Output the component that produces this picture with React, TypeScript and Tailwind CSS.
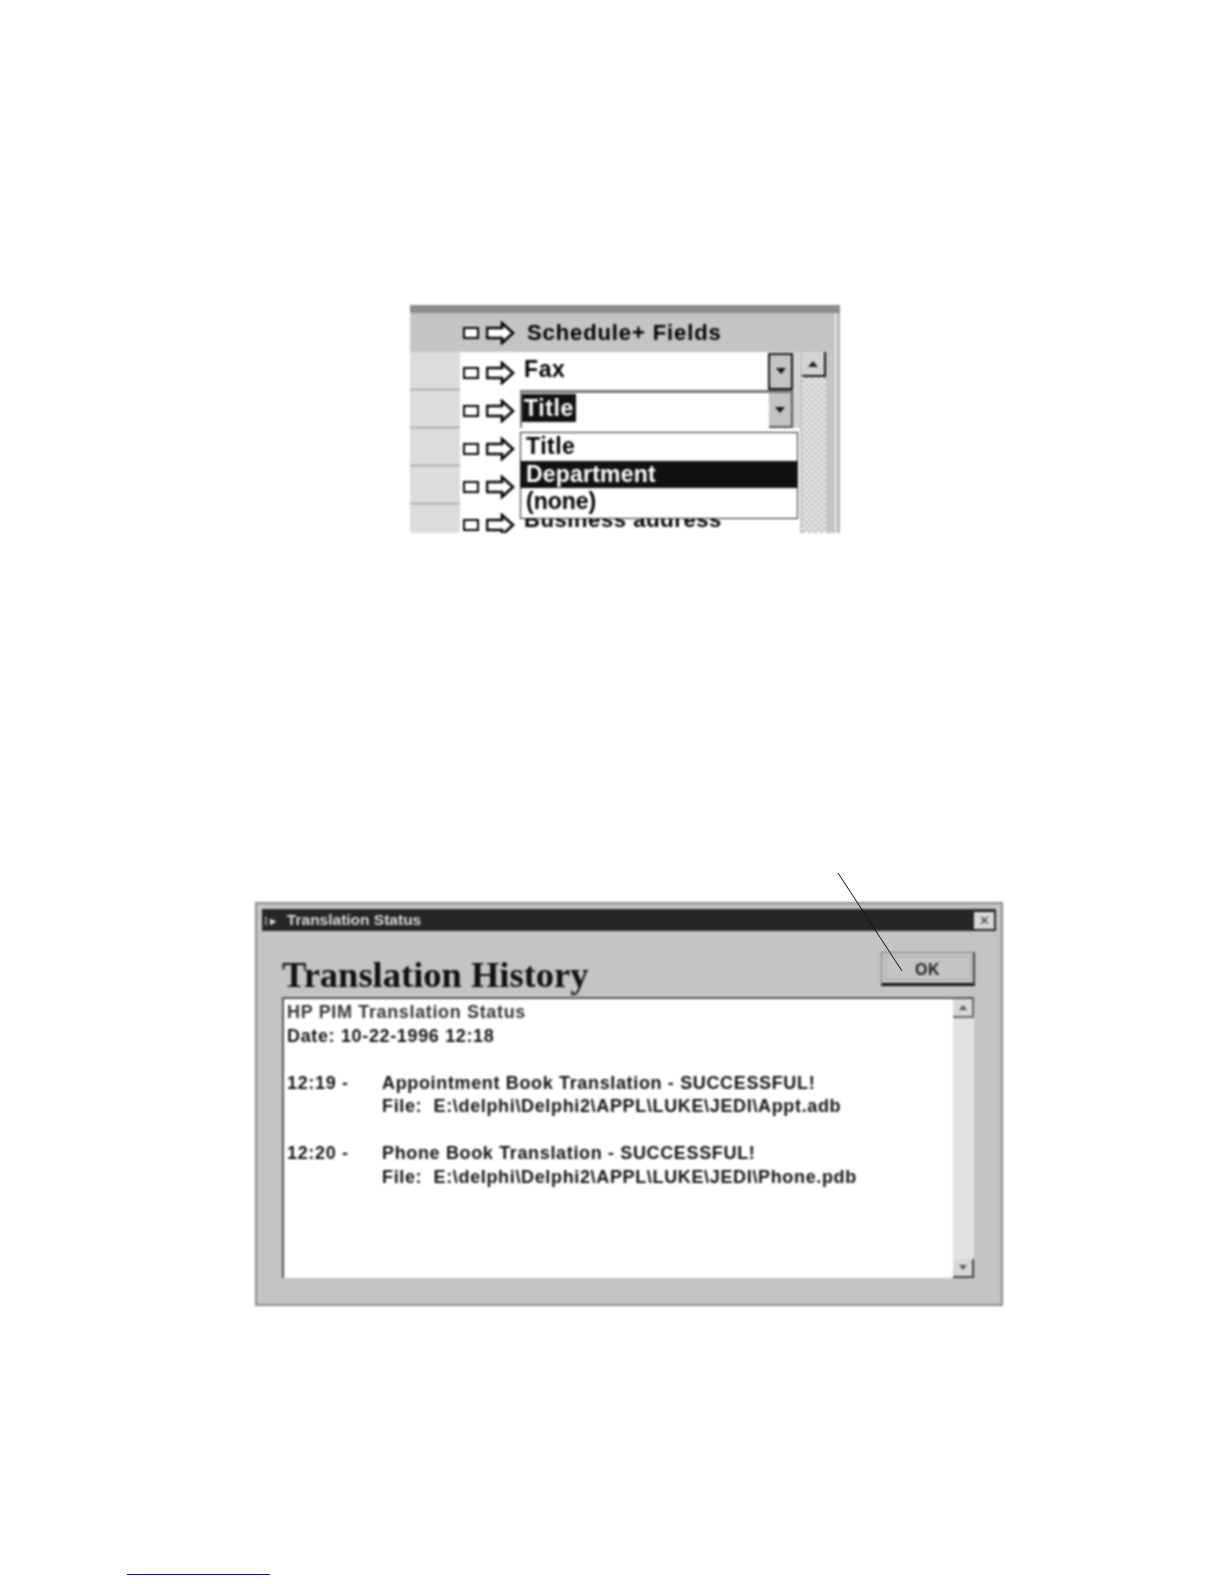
const sans = "font-['Liberation_Sans',Arial,sans-serif]";

function Handle() {
  return (
    <div className="flex items-center gap-[7px] w-[60px] shrink-0 pl-[3px]">
      <div className="w-[16px] h-[12px] border-2 border-black bg-white" />
      <svg width="29" height="24" viewBox="0 0 29 24" fill="#fff" stroke="#000" strokeWidth="2.6">
        <path d="M1 7h15V2l11 10-11 10v-5H1z" />
      </svg>
    </div>
  );
}

function ArrowDown() {
  return <div className="w-0 h-0 border-x-[5px] border-x-transparent border-t-[6px] border-t-[#111]" />;
}

function Row({ children }: { children?: React.ReactNode }) {
  return (
    <div className="flex h-[38px]">
      <div className="w-[50px] shrink-0 bg-[#dcdcdc] border-b border-[#8a8a8a]" />
      <div className="flex flex-1 bg-white items-center">
        <div className="mt-[4px]">
          <Handle />
        </div>
        {children}
      </div>
    </div>
  );
}

function FieldMapper() {
  return (
    <div className={`${sans} relative ml-[410px] w-[430px] h-[228px] overflow-hidden bg-[#b4b4b4] pr-[3px] border-t-[8px] border-t-[#8c8c8c] blur-[0.8px]`}>
      <div className="h-full bg-[#c4c4c4] border-r-2 border-r-[#e8e8e8]">
        <div className="h-[39px] flex items-center pl-[50px]">
          <div className="mt-[1px]">
            <Handle />
          </div>
          <span className="text-[22px] font-bold text-black tracking-[0.9px] ml-[7px]">Schedule+ Fields</span>
        </div>
        <div className="flex">
          <div className="w-[390px] shrink-0">
            <Row>
              <div className="flex flex-1 h-full items-center">
                <div className="flex flex-1 items-center justify-between">
                  <span className="text-[23px] text-black ml-[4px] tracking-[0.6px] font-bold -mt-[4px]">Fax</span>
                  <div className="w-[25px] h-[37px] bg-[#c4c4c4] border-2 border-[#111] flex items-center justify-center">
                    <ArrowDown />
                  </div>
                </div>
                <div className="w-[7px] h-full bg-[#d4d4d4]" />
              </div>
            </Row>
            <Row>
              <div className="flex flex-1 h-full items-center">
                <div className="flex flex-1 h-full items-center justify-between border-t-[3px] border-l-2 border-t-[#777] border-l-[#777]">
                  <span className="bg-[#111] text-white text-[23px] leading-[28px] px-[2px] font-bold tracking-[0.6px] -mt-[5px]">Title</span>
                  <div className="w-[24px] h-full bg-[#c4c4c4] border-b-2 border-b-[#555] border-r-2 border-r-[#555] flex items-center justify-center">
                    <ArrowDown />
                  </div>
                </div>
                <div className="w-[7px] h-full bg-[#d4d4d4]" />
              </div>
            </Row>
            <Row />
            <Row />
            <Row>
              <span className="text-[22px] text-black font-bold ml-[4px] tracking-[0.6px] -mt-[7px]">Business address</span>
            </Row>
          </div>
          <div className="flex flex-col pl-[2px]">
            <div className="w-[24px] h-[25px] bg-[#d4d4d4] border-r-2 border-b-2 border-[#111] flex items-center justify-center">
              <div className="w-0 h-0 border-x-[5px] border-x-transparent border-b-[6px] border-b-[#222]" />
            </div>
            <div className="w-[24px] h-[160px] bg-[repeating-conic-gradient(#c4c4c4_0_25%,#ececec_0_50%)] bg-[length:6px_6px]" />
          </div>
        </div>
      </div>
      {/* open dropdown sits over the rows */}
      <div className="absolute left-[110px] top-[119px] w-[278px] h-[87px] bg-white border border-[#222] flex flex-col text-[23px] leading-[27px] text-black">
        <div className="h-[28px] pl-[5px] font-bold tracking-[0.5px]">Title</div>
        <div className="h-[27px] pl-[5px] bg-[#111] text-white font-bold tracking-[0.2px]">Department</div>
        <div className="h-[28px] pl-[5px] font-bold">(none)</div>
      </div>
    </div>
  );
}

function LogLine({ time, text }: { time?: string; text?: string }) {
  return (
    <div className="flex h-[23.5px] items-center">
      <span className="w-[95px] shrink-0">{time}</span>
      <span className="whitespace-pre">{text}</span>
    </div>
  );
}

function StatusWindow() {
  return (
    <div className={`${sans} relative ml-[255px] w-[748px] h-[404px] bg-[#c4c4c4] border-2 border-[#8a8a8a] p-[5px] flex flex-col blur-[0.8px]`}>
      <div className="h-[22px] bg-[#262626] flex items-center justify-between pl-[2px] pr-[2px]">
        <span className="text-[15.5px] font-bold text-[#ddd]">
          <span className="text-[11px] mr-[4px]">⁞►</span> Translation Status
        </span>
        <div className="w-[20px] h-[17px] bg-[#d8d8d8] flex items-center justify-center text-[13px] leading-none text-[#333]">✕</div>
      </div>
      <div className="flex items-end justify-between pl-[20px] pr-[22px] h-[58px]">
        <h1 className="font-['Liberation_Serif',serif] font-bold text-[36.5px] leading-[40px] text-[#111] -mb-[6px]">Translation History</h1>
        <div className="w-[94px] h-[34px] -mr-[1px] border border-[#777] border-b-[3px] border-b-[#111] border-r-2 border-r-[#444] flex items-center justify-center mb-[3px]">
          <div className="w-[86px] h-[24px] border border-[#aaa] flex items-center justify-center text-[16px] font-bold text-[#222] tracking-[0.5px] pt-[3px]">
            OK
          </div>
        </div>
      </div>
      <div className="ml-[20px] mr-[22px] mt-[8px] h-[281px] bg-white border-t-2 border-l-2 border-[#555] flex">
        <div className="flex-1 pl-[3px] pt-[2px] text-[18px] font-bold text-[#111] tracking-[0.65px]">
          <div className="flex h-[23.5px] items-center text-[#333]">HP PIM Translation Status</div>
          <div className="flex h-[23.5px] items-center">Date: 10-22-1996 12:18</div>
          <div className="h-[23.5px]" />
          <LogLine time="12:19 -" text="Appointment Book Translation - SUCCESSFUL!" />
          <LogLine text="File:  E:\delphi\Delphi2\APPL\LUKE\JEDI\Appt.adb" />
          <div className="h-[23.5px]" />
          <LogLine time="12:20 -" text="Phone Book Translation - SUCCESSFUL!" />
          <LogLine text="File:  E:\delphi\Delphi2\APPL\LUKE\JEDI\Phone.pdb" />
        </div>
        <div className="w-[21px] bg-[#e2e2e2] flex flex-col justify-between">
          <div className="h-[19px] bg-[#d8d8d8] border-r-2 border-b-2 border-[#666] flex items-center justify-center">
            <div className="w-0 h-0 border-x-[4px] border-x-transparent border-b-[5px] border-b-[#555]" />
          </div>
          <div className="h-[19px] bg-[#d8d8d8] border-r-2 border-b-2 border-[#444] flex items-center justify-center">
            <div className="w-0 h-0 border-x-[4px] border-x-transparent border-t-[5px] border-t-[#555]" />
          </div>
        </div>
      </div>
    </div>
  );
}

export default function App() {
  return (
    <div className="relative w-[1224px] h-[1584px] bg-white overflow-hidden flex flex-col">
      <div className="pt-[305px]">
        <FieldMapper />
      </div>
      <div className="mt-[369px]">
        <StatusWindow />
      </div>
      {/* callout line pointing at the OK button */}
      <svg className="absolute left-[830px] top-[865px]" width="80" height="112" viewBox="0 0 80 112" fill="none">
        <path d="M8 8L72 106" stroke="#111" strokeWidth="1" />
      </svg>
      <div className="mt-auto mb-[9px] ml-[127px] w-[143px] h-[1.5px] bg-[#10108c]" />
    </div>
  );
}
